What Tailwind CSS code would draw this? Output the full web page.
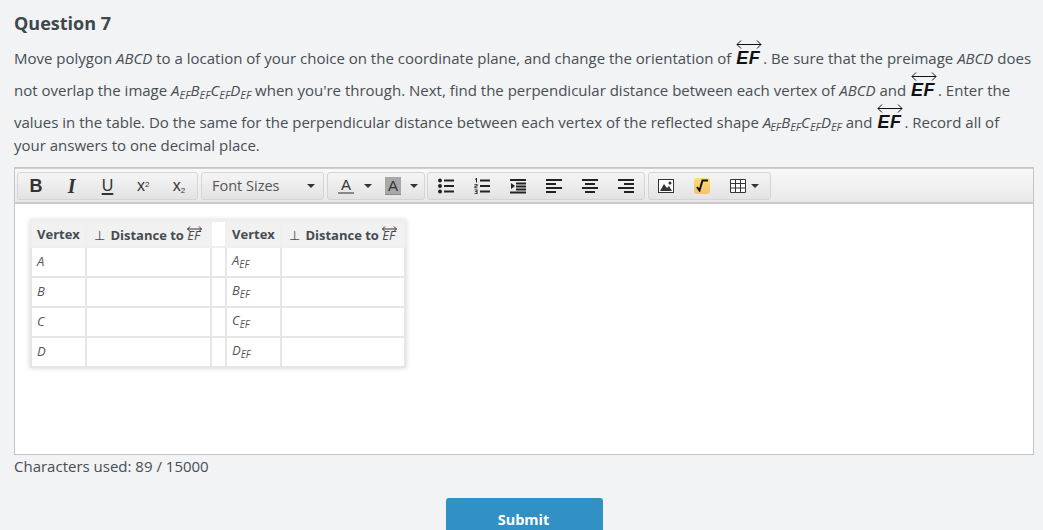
<!DOCTYPE html>
<html>
<head>
<meta charset="utf-8">
<script src="https://cdn.jsdelivr.net/npm/@tailwindcss/browser@4"></script>
</head>
<body class="bg-[#f1f3f5] h-[530px] w-[1043px] overflow-hidden text-[#484e53] font-['Open_Sans',sans-serif]">
<div class="pl-[14px] pr-[9px]">
  <h2 class="text-[18px] leading-[24px] pt-[11px] font-bold text-[#40474c]">Question 7</h2>
  <div class="mt-[7px] text-[15px]">
    <div class="h-[32px] leading-[32px] whitespace-nowrap">Move polygon <i>ABCD</i> to a location of your choice on the coordinate plane, and change the orientation of <span class="relative inline-block w-[28px] h-[20px] leading-[20px] align-baseline text-[#111] italic font-bold font-['Liberation_Sans',sans-serif] text-[18px] tracking-[0.5px] pl-[1px]">EF<svg class="absolute left-[1px] top-[-8px]" width="26" height="11" viewBox="0 0 26 11" fill="none" stroke="#111"><path d="M1 4.500H25M5 0.500L1 4.500L5 8.500M21 0.500L25 4.500L21 8.500"/></svg></span>. Be sure that the preimage <i>ABCD</i> does</div>
    <div class="h-[32px] leading-[32px] whitespace-nowrap">not overlap the image <i>A<sub class="text-[11px]">EF</sub>B<sub class="text-[11px]">EF</sub>C<sub class="text-[11px]">EF</sub>D<sub class="text-[11px]">EF</sub></i> when you're through. Next, find the perpendicular distance between each vertex of <i>ABCD</i> and <span class="relative inline-block w-[28px] h-[20px] leading-[20px] align-baseline text-[#111] italic font-bold font-['Liberation_Sans',sans-serif] text-[18px] tracking-[0.5px] pl-[1px]">EF<svg class="absolute left-[1px] top-[-8px]" width="26" height="11" viewBox="0 0 26 11" fill="none" stroke="#111"><path d="M1 4.500H25M5 0.500L1 4.500L5 8.500M21 0.500L25 4.500L21 8.500"/></svg></span>. Enter the</div>
    <div class="h-[32px] leading-[32px] whitespace-nowrap">values in the table. Do the same for the perpendicular distance between each vertex of the reflected shape <i>A<sub class="text-[11px] -ml-[1px]">EF</sub>B<sub class="text-[11px]">EF</sub>C<sub class="text-[11px]">EF</sub>D<sub class="text-[11px]">EF</sub></i> and <span class="relative inline-block w-[28px] h-[20px] leading-[20px] align-baseline text-[#111] italic font-bold font-['Liberation_Sans',sans-serif] text-[18px] tracking-[0.5px] pl-[1px]">EF<svg class="absolute left-[1px] top-[-8px]" width="26" height="11" viewBox="0 0 26 11" fill="none" stroke="#111"><path d="M1 4.500H25M5 0.500L1 4.500L5 8.500M21 0.500L25 4.500L21 8.500"/></svg></span>. Record all of</div>
    <div class="h-[29px] leading-[14px] whitespace-nowrap">your answers to one decimal place.</div>
  </div>

  <!-- editor -->
  <div class="w-[1020px] h-[288px] border border-[#c5c5c5] bg-white flex flex-col">
    <div class="h-[36px] shrink-0 bg-gradient-to-b from-[#f9f9f9] to-[#e9e9e9] border-b-2 border-[#c9c9c9] flex items-center pl-[2px] pt-[1px] gap-[3px] shadow-[inset_0_1px_0_#d0d0d0]">
      <div class="h-[28px] w-[181px] flex rounded-[3px] border border-[#d4d4d4] bg-gradient-to-b from-[#f5f5f5] to-[#e3e3e3] text-[#333] font-['Liberation_Sans',sans-serif]">
        <div class="w-[36px] text-center font-bold text-[18px] leading-[26px]">B</div>
        <div class="w-[36px] text-center italic font-bold text-[20px] leading-[26px] font-['Liberation_Serif',serif]">I</div>
        <div class="w-[36px] text-center text-[16px] leading-[25px] underline decoration-2 underline-offset-2">U</div>
        <div class="w-[36px] text-center text-[16px] leading-[25px]">x<sup class="text-[8px]">2</sup></div>
        <div class="w-[36px] text-center text-[16px] leading-[25px]">x<sub class="text-[8px]">2</sub></div>
      </div>
      <div class="h-[28px] w-[123px] flex items-center justify-between rounded-[3px] border border-[#d4d4d4] bg-gradient-to-b from-[#f5f5f5] to-[#e3e3e3] pl-[10px] pr-[8px] text-[#555] text-[14.500px]">
        <span>Font Sizes</span>
        <svg width="8" height="4" viewBox="0 0 8 4"><path d="M0 0H8L4 4Z" fill="#333"/></svg>
      </div>
      <div class="h-[28px] w-[98px] flex items-center rounded-[3px] border border-[#d4d4d4] bg-gradient-to-b from-[#f5f5f5] to-[#e3e3e3] font-['Liberation_Sans',sans-serif] text-[#333]">
        <span class="ml-[10px] w-[16px] text-center text-[15px] leading-[15px] border-b-2 border-[#888]">A</span>
        <svg class="ml-[10px]" width="8" height="4" viewBox="0 0 8 4"><path d="M0 0H8L4 4Z" fill="#333"/></svg>
        <span class="ml-[13px] w-[16px] text-center text-[15px] leading-[17px] bg-[#a8a8a8] border-b border-[#888]">A</span>
        <svg class="ml-[9px]" width="8" height="4" viewBox="0 0 8 4"><path d="M0 0H8L4 4Z" fill="#333"/></svg>
      </div>
      <div class="-ml-[1px] h-[28px] w-[218px] flex items-center rounded-[3px] border border-[#d4d4d4] bg-gradient-to-b from-[#f5f5f5] to-[#e3e3e3]">
        <svg class="ml-[10px]" width="16" height="16" viewBox="0 0 16 16" fill="#222"><circle cx="2" cy="2.500" r="2"/><circle cx="2" cy="8" r="2"/><circle cx="2" cy="13.500" r="2"/><path d="M6 1.500H16V3.500H6ZM6 7H16V9H6ZM6 12.500H16V14.500H6Z"/></svg>
        <svg class="ml-[20px]" width="16" height="16" viewBox="0 0 16 16" fill="#222"><path d="M6 1.500H16V3.500H6ZM6 7H16V9H6ZM6 12.500H16V14.500H6Z"/><path d="M1 1L2.500 0H3V4.500H2V1.300L1 2ZM0.500 6H3.500V8.500H1.500V9.500H3.500V10.300H0.500V7.800H2.500V6.800H0.500ZM0.500 11.500H3.500V16H0.500V15.200H2.500V14H1V13.300H2.500V12.300H0.500Z"/></svg>
        <svg class="ml-[20px]" width="16" height="16" viewBox="0 0 16 16" fill="#222"><path d="M0 1H16V3H0ZM6 4.500H16V6.500H6ZM6 7.500H16V9.500H6ZM6 10.500H16V12.500H6ZM0 13.500H16V15.500H0ZM1 5L5 8L1 11Z"/></svg>
        <svg class="ml-[20px]" width="16" height="16" viewBox="0 0 16 16" fill="#222"><path d="M0 1H16V3H0ZM0 5H10V7H0ZM0 9H16V11H0ZM0 13H10V15H0Z"/></svg>
        <svg class="ml-[20px]" width="16" height="16" viewBox="0 0 16 16" fill="#222"><path d="M0 1H16V3H0ZM3 5H13V7H3ZM0 9H16V11H0ZM3 13H13V15H3Z"/></svg>
        <svg class="ml-[20px]" width="16" height="16" viewBox="0 0 16 16" fill="#222"><path d="M0 1H16V3H0ZM6 5H16V7H6ZM0 9H16V11H0ZM6 13H16V15H6Z"/></svg>
      </div>
      <div class="h-[28px] w-[123px] flex items-center rounded-[3px] border border-[#d4d4d4] bg-gradient-to-b from-[#f5f5f5] to-[#e3e3e3]">
        <svg class="ml-[9px]" width="16" height="14" viewBox="0 0 16 14"><rect x="0.500" y="0.500" width="15" height="13" fill="#fff" stroke="#333"/><path d="M2 12L6 5L9 9L11 7L14 12Z" fill="#333"/><circle cx="12" cy="4" r="1.500" fill="#333"/></svg>
        <span class="ml-[20px] w-[16px] h-[16px] rounded-[3px] bg-gradient-to-b from-[#fbdc6c] to-[#f9bf6f] flex items-center justify-center"><svg width="12" height="13" viewBox="0 0 12 13" fill="none" stroke="#111" stroke-width="2"><path d="M1 8L3.500 11.500L6.500 1.500H12"/></svg></span>
        <svg class="ml-[20px]" width="16" height="14" viewBox="0 0 16 14" fill="#fff" stroke="#333"><path d="M0.500 0.500H15.500V13.500H0.500ZM5.500 0.500V13.500M10.500 0.500V13.500M0.500 4.500H15.500M0.500 9H15.500"/></svg>
        <svg class="ml-[5px]" width="8" height="4" viewBox="0 0 8 4"><path d="M0 0H8L4 4Z" fill="#333"/></svg>
      </div>
    </div>
    <div class="pl-[16px] pt-[16px]">
      <table class="border-collapse table-fixed w-[374px] -ml-[1px] shadow-[0_0_5px_rgba(0,0,0,0.18)] text-[13px] text-[#555] [&_td]:border-2 [&_td]:border-[#e6e6e6] [&_th]:border-2 [&_th]:border-[#efefef]">
        <colgroup><col class="w-[55px]"><col class="w-[125px]"><col class="w-[15px]"><col class="w-[55px]"><col class="w-[124px]"></colgroup>
        <tr class="h-[26px] text-[13px] font-bold text-[#454b50] bg-[#f1f1f1]">
          <th class="text-left pl-[5px] pt-[1px] whitespace-nowrap">Vertex</th>
          <th class="text-left pl-[7px] pt-[3px] whitespace-nowrap"><span class="font-normal mr-[2px]">⊥</span> Distance to <span class="relative inline-block font-normal italic">EF<svg class="absolute left-[0px] top-[0px]" width="15" height="6" viewBox="0 0 15 6" fill="none" stroke="#333"><path d="M0.500 3H14.500M3 0.500L0.500 3L3 5.500M12 0.500L14.500 3L12 5.500"/></svg></span></th>
          <th class="bg-white"></th>
          <th class="text-left pl-[5px] pt-[1px] whitespace-nowrap">Vertex</th>
          <th class="text-left pl-[7px] pt-[3px] whitespace-nowrap"><span class="font-normal mr-[2px]">⊥</span> Distance to <span class="relative inline-block font-normal italic">EF<svg class="absolute left-[0px] top-[0px]" width="15" height="6" viewBox="0 0 15 6" fill="none" stroke="#333"><path d="M0.500 3H14.500M3 0.500L0.500 3L3 5.500M12 0.500L14.500 3L12 5.500"/></svg></span></th>
        </tr>
        <tr class="h-[30px]"><td class="pl-[5px] italic">A</td><td></td><td></td><td class="pl-[5px] pb-[2px] italic">A<sub class="text-[10px]">EF</sub></td><td></td></tr>
        <tr class="h-[30px]"><td class="pl-[5px] italic">B</td><td></td><td></td><td class="pl-[5px] pb-[2px] italic">B<sub class="text-[10px]">EF</sub></td><td></td></tr>
        <tr class="h-[30px]"><td class="pl-[5px] italic">C</td><td></td><td></td><td class="pl-[5px] pb-[2px] italic">C<sub class="text-[10px]">EF</sub></td><td></td></tr>
        <tr class="h-[30px]"><td class="pl-[5px] italic">D</td><td></td><td></td><td class="pl-[5px] pb-[2px] italic">D<sub class="text-[10px]">EF</sub></td><td></td></tr>
      </table>
    </div>
  </div>
  <div class="text-[15px] leading-[22px]">Characters used: 89 / 15000</div>
  <div class="flex justify-center w-[1020px] mt-[21px] pl-[1px]">
    <button class="w-[157px] h-[50px] bg-[#3191c5] rounded-[3px] text-white font-bold text-[14.500px] pb-[6px] pr-[2px]">Submit</button>
  </div>
</div>
</body>
</html>
